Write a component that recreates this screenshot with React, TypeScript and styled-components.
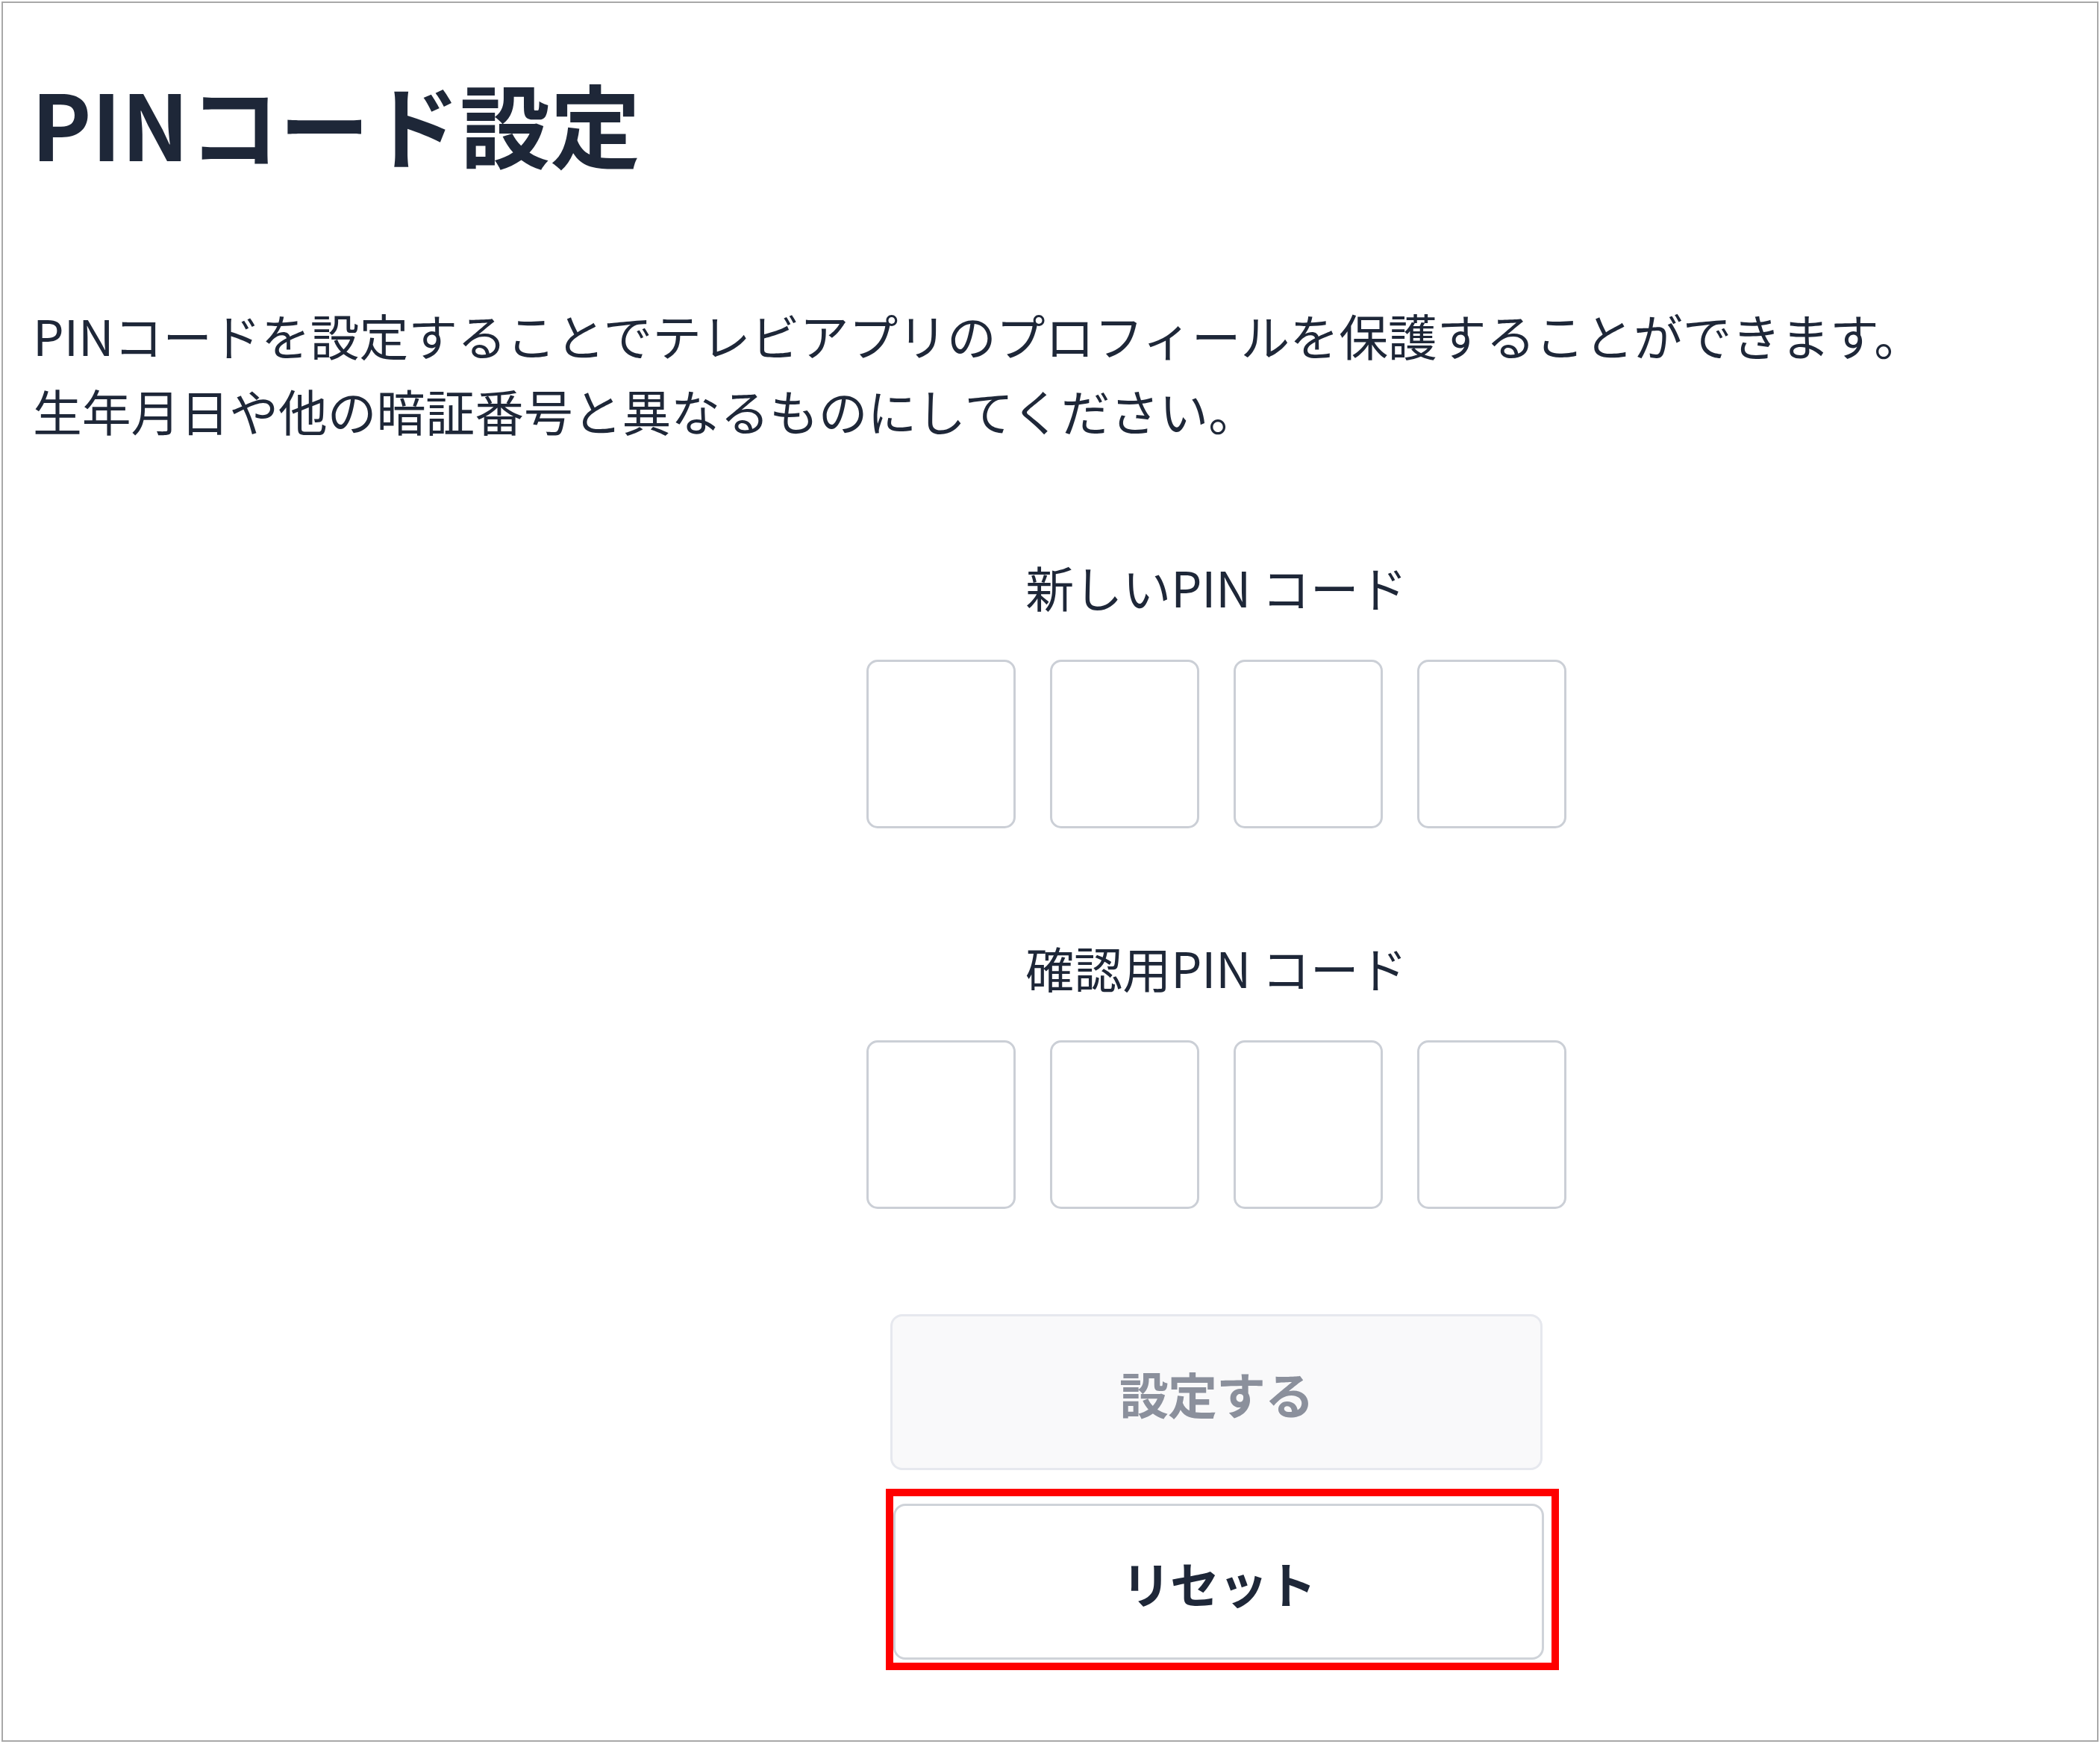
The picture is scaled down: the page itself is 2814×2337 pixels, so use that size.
import React from "react";
import styled, { createGlobalStyle } from "styled-components";

const GlobalStyle = createGlobalStyle`
  html, body {
    margin: 0;
    padding: 0;
    background: #ffffff;
  }
  body {
    font-family: "Noto Sans CJK JP", "Noto Sans", sans-serif;
    color: #1e2738;
  }
`;

const Frame = styled.main`
  box-sizing: border-box;
  margin: 2px 2px 0 2px;
  height: 2332px;
  border: 2px solid #a8a8a8;
  padding: 88px 40px 0 40px;
  background: #ffffff;
`;

const Title = styled.h1`
  margin: 0 0 0 -2px;
  font-size: 121px;
  line-height: 144px;
  font-weight: 700;
  color: #1e2738;
`;

const Lead = styled.p`
  margin: 162px 0 0 0;
  font-size: 65.8px;
  line-height: 101px;
  font-weight: 400;
  color: #1e2738;
`;

const FormColumn = styled.section`
  width: 1000px;
  margin-left: 1086px;
  display: flex;
  flex-direction: column;
  align-items: center;
`;

const FieldLabel = styled.label<{ $gap: number }>`
  display: block;
  margin-top: ${(p) => p.$gap}px;
  font-size: 65px;
  line-height: 97px;
  font-weight: 400;
  color: #1e2738;
`;

const PinRow = styled.div`
  display: flex;
  gap: 46px;
  margin-top: 49px;
`;

const PinCell = styled.input`
  box-sizing: border-box;
  width: 200px;
  height: 226px;
  border: 3px solid #cbcfd6;
  border-radius: 15px;
  background: #ffffff;
  font-family: inherit;
  font-size: 90px;
  text-align: center;
  color: #1e2738;
  outline: none;
  padding: 0;
`;

const ActionButton = styled.button<{ $variant: "primary" | "secondary" }>`
  box-sizing: border-box;
  height: 209px;
  border-radius: 16px;
  font-family: inherit;
  font-size: 66px;
  font-weight: 700;
  letter-spacing: -1px;
  cursor: pointer;
  ${(p) =>
    p.$variant === "primary"
      ? `
    width: 874px;
    margin-top: 141px;
    background: #f9f9fa;
    border: 3px solid #e6e8ee;
    color: #8b909c;
  `
      : `
    width: 872px;
    background: #ffffff;
    border: 3px solid #cfd3d9;
    color: #1e2738;
  `}
`;

const Highlight = styled.div`
  margin-top: 25px;
  margin-left: 16px;
  padding: 10px 10px 4px 0;
  border: 10px solid #ff0000;
  display: flex;
`;

const PinGroup: React.FC<{ label: string; gap: number; name: string }> = ({
  label,
  gap,
  name,
}) => (
  <>
    <FieldLabel $gap={gap} htmlFor={`${name}-0`}>
      {label}
    </FieldLabel>
    <PinRow>
      {[0, 1, 2, 3].map((i) => (
        <PinCell
          key={i}
          id={`${name}-${i}`}
          type="password"
          inputMode="numeric"
          maxLength={1}
          aria-label={`${label} ${i + 1}`}
        />
      ))}
    </PinRow>
  </>
);

export default function App() {
  return (
    <>
      <GlobalStyle />
      <Frame>
        <Title>PINコード設定</Title>
        <Lead>
          PINコードを設定することでテレビアプリのプロフィールを保護することができます。
          <br />
          生年月日や他の暗証番号と異なるものにしてください。
        </Lead>
        <FormColumn>
          <PinGroup label="新しいPIN コード" gap={138} name="new-pin" />
          <PinGroup label="確認用PIN コード" gap={138} name="confirm-pin" />
          <ActionButton $variant="primary" disabled>
            設定する
          </ActionButton>
          <Highlight>
            <ActionButton $variant="secondary">リセット</ActionButton>
          </Highlight>
        </FormColumn>
      </Frame>
    </>
  );
}
